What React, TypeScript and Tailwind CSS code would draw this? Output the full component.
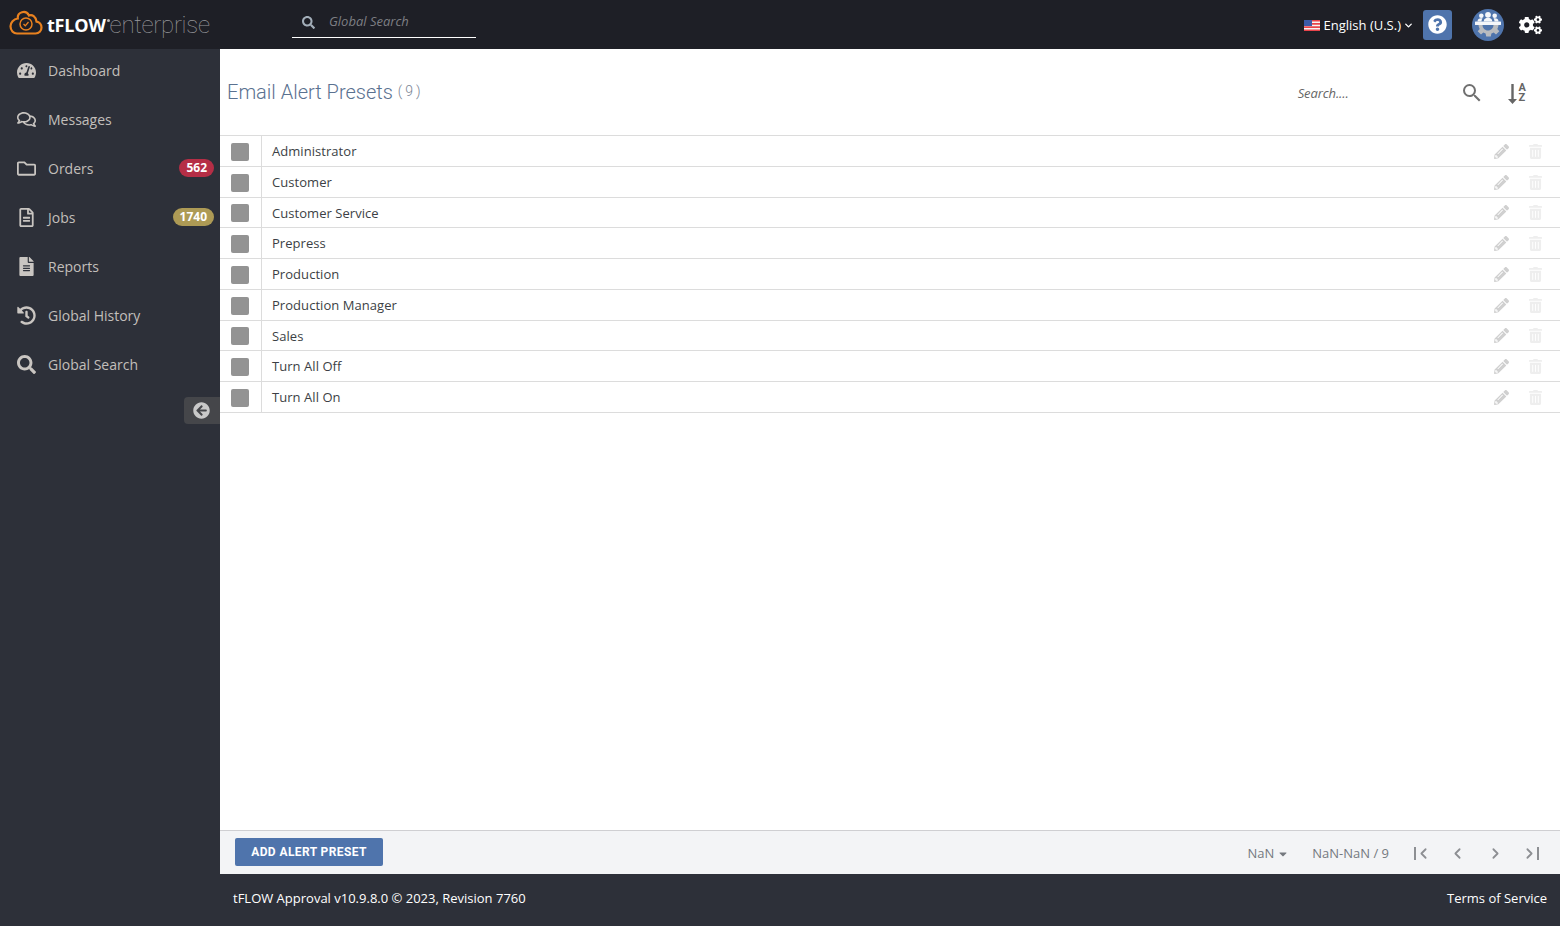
import React from "react";
import { FaTachometerAlt, FaRegComments, FaRegFolder, FaRegFileAlt, FaFileAlt, FaHistory, FaSearch, FaArrowCircleLeft, FaPencilAlt, FaTrashAlt, FaCogs, FaQuestionCircle, FaCaretDown } from "react-icons/fa";
import { LuChevronLeft, LuChevronRight, LuChevronDown } from "react-icons/lu";
import { MdSearch } from "react-icons/md";

const nav: { label: string; Icon: React.ComponentType<{ className?: string }>; badge?: string; color?: string }[] = [
  { label: "Dashboard", Icon: FaTachometerAlt },
  { label: "Messages", Icon: FaRegComments },
  { label: "Orders", Icon: FaRegFolder, badge: "562", color: "bg-[#b52e46]" },
  { label: "Jobs", Icon: FaRegFileAlt, badge: "1740", color: "bg-[#ad9a55]" },
  { label: "Reports", Icon: FaFileAlt },
  { label: "Global History", Icon: FaHistory },
  { label: "Global Search", Icon: FaSearch },
];

const rows = ["Administrator", "Customer", "Customer Service", "Prepress", "Production", "Production Manager", "Sales", "Turn All Off", "Turn All On"];

function Logo() {
  return (
    <svg width="34" height="26" viewBox="0 0 34 26" fill="none" stroke="#e8811f" strokeWidth="2.2" className="mb-[3px] shrink-0">
      <path d="M8 23.5h18.5c3.5 0 6-2.7 6-6 0-3-2.200-5.500-5-5.900C27 6.500 23 4 20 5.500 18.500 2.500 15.500 1.500 13 2.200 10 3 8.500 5.500 8.800 8.500 4.500 9 1.500 12.500 1.500 16.300c0 4 3 7.200 6.500 7.200z" />
      <circle cx="17" cy="14" r="6" strokeWidth="1.5" />
      <path d="M14.500 14l1.800 1.800 3.200-3.800" strokeWidth="1.300" />
    </svg>
  );
}

function Flag() {
  return (
    <svg width="16" height="11" viewBox="0 0 16 11" className="shrink-0">
      <rect width="16" height="11" fill="#f5f5f5" />
      <path d="M0 0h16v1.600H0zM0 3.100h16v1.600H0zM0 6.300h16v1.600H0zM0 9.400h16V11H0z" fill="#e8434a" />
      <rect width="8" height="6" fill="#3b5aa8" />
    </svg>
  );
}

function TeamGear() {
  return (
    <svg width="32" height="32" viewBox="0 0 32 32" className="shrink-0">
      <circle cx="16" cy="16" r="16" fill="#4f74ac" />
      <path d="M5.500 16h5c0 3 2.500 5.500 5.500 5.500s5.500-2.500 5.500-5.500h5c-.1 1.500-.5 2.800-1.200 4l2 2.300-3.300 3.300-2.300-2c-.7.4-1.500.8-2.300 1l-.6 3h-4.600l-.6-3c-.8-.2-1.600-.6-2.300-1l-2.300 2-3.300-3.300 2-2.300c-.7-1.200-1.100-2.500-1.200-4z" fill="#b9bbbf" />
      <g fill="#f4f6fa">
        <circle cx="16" cy="5.800" r="2.900" />
        <circle cx="9.300" cy="6.800" r="2.300" />
        <circle cx="22.700" cy="6.800" r="2.300" />
        <path d="M11.700 12.500c0-2.700 1.900-3.800 4.300-3.800s4.300 1.100 4.300 3.800z" />
        <path d="M5.500 12.500c0-2.300 1.500-3.300 3.500-3.300.8 0 1.300.2 1.500.4-.7.7-1 1.700-1 2.900zM26.500 12.500c0-2.300-1.500-3.300-3.500-3.300-.8 0-1.300.2-1.500.4.700.7 1 1.700 1 2.900z" />
        <rect x="3" y="12.500" width="26" height="3.500" rx="0.600" />
      </g>
    </svg>
  );
}

function SortIcon() {
  return (
    <div className="ml-[24px] mr-[34px] flex items-center text-[#666]">
      <svg width="9" height="20" viewBox="0 0 9 20" className="mt-[3px] shrink-0" fill="#666">
        <path d="M3.300 0h2.400v15h3.300l-4.500 5-4.500-5h3.300z" />
      </svg>
      <span className="ml-[2px] mt-[1px] flex flex-col text-[11px] font-bold leading-[10px]" style={{ fontFamily: 'Roboto, sans-serif' }}>
        <span>A</span>
        <span>Z</span>
      </span>
    </div>
  );
}

export default function App() {
  const font = { fontFamily: '"Open Sans", sans-serif' };
  return (
    <div className="flex h-[926px] w-[1560px] flex-col overflow-hidden bg-white" style={font}>
      <header className="flex h-[49px] shrink-0 items-center bg-[#1e1f26]">
        <div className="flex w-[292px] shrink-0 items-center pl-[9px]">
          <Logo />
          <span className="ml-[4px] text-[18px] font-bold leading-none tracking-[-0.2px] text-white">tFLOW</span>
          <span className="mb-[8px] ml-[1px] h-[3px] w-[3px] shrink-0 rounded-full bg-[#b9b9b9]" />
          <span className="text-[24px] leading-none tracking-[-0.3px] text-[#9a9a9e]" style={{ fontFamily: 'Roboto, sans-serif', fontWeight: 100 }}>enterprise</span>
        </div>
        <div className="mb-[4px] mt-[-1px] flex h-[32px] w-[184px] items-center border-b border-white pl-[10px] pt-[1px]">
          <FaSearch className="h-[13px] w-[13px] text-[#a3aeb9]" />
          <span className="ml-[14px] text-[13px] italic text-[#7d7e83]">Global Search</span>
        </div>
        <div className="ml-auto flex items-center">
          <div className="mt-[2px] flex items-center">
            <Flag />
            <span className="ml-[4px] text-[13px] text-white">English (U.S.)</span>
            <LuChevronDown className="ml-[2px] h-[11px] w-[11px] text-white" strokeWidth={3} />
          </div>
          <div className="ml-[9px] flex h-[30px] w-[29px] items-center justify-center rounded-[3px] bg-[#4f74ac]">
            <FaQuestionCircle className="h-[19px] w-[19px] text-white" />
          </div>
          <div className="ml-[20px]"><TeamGear /></div>
          <FaCogs className="ml-[15px] mr-[18px] h-[22px] w-[23px] text-white" />
        </div>
      </header>

      <div className="flex min-h-0 flex-1">
        <aside className="relative w-[220px] shrink-0 bg-[#2d3039]">
          {nav.map(({ label, Icon, badge, color }) => (
            <div key={label} className="flex h-[49px] items-center pb-[7px] pl-[17px] pr-[6px]">
              <span className="flex w-[31px] shrink-0"><Icon className="h-[19px] w-[19px] text-[#c9c5c1]" /></span>
              <span className="text-[14px] text-[#c2bfbb]">{label}</span>
              {badge && <span className={`ml-auto flex h-[18px] items-center rounded-full px-[7px] text-[12px] font-bold text-white ${color}`}>{badge}</span>}
            </div>
          ))}
          <div className="absolute right-0 top-[348px] flex h-[27px] w-[36px] items-center rounded-l-[4px] bg-[#45464a] pl-[9px]">
            <FaArrowCircleLeft className="h-[17px] w-[17px] text-[#c9c9c9]" />
          </div>
        </aside>

        <main className="flex min-w-0 flex-1 flex-col">
          <div className="flex h-[86px] shrink-0 items-center pl-[7px]">
            <h1 className="text-[20px] text-[#5a7190]" style={{ fontFamily: 'Roboto, sans-serif', fontWeight: 300 }}>Email Alert Presets</h1>
            <span className="mb-[2px] ml-[5px] text-[14px] tracking-[3px] text-[#7a8594]" style={{ fontFamily: 'Roboto, sans-serif', fontWeight: 300 }}>(9)</span>
            <span className="ml-auto mt-[4px] text-[13px] tracking-[-0.1px] italic text-[#666]">Search....</span>
            <MdSearch className="ml-[111px] mt-[2px] h-[24px] w-[24px] text-[#707070]" />
            <SortIcon />
          </div>
          <div className="border-t border-[#dcdcdc]">
            {rows.map((r) => (
              <div key={r} className="flex h-[30.78px] items-center border-b border-[#dcdcdc]">
                <div className="flex h-full w-[42px] shrink-0 items-center border-r border-[#dcdcdc] pl-[11px] pt-[2px]">
                  <span className="h-[18px] w-[18px] rounded-[2px] bg-[#939393]" />
                </div>
                <span className="ml-[10px] pt-[2px] text-[13px] tracking-[0.05px] text-[#3c3f45]">{r}</span>
                <FaPencilAlt className="ml-auto mt-[1px] h-[15px] w-[15px] text-[#d0d0d0]" />
                <FaTrashAlt className="ml-[20px] mr-[18px] mt-[1px] h-[15px] w-[13px] text-[#eeeeee]" />
              </div>
            ))}
          </div>
          <div className="mt-auto flex h-[44px] shrink-0 items-center border-t border-[#cfcfd2] bg-[#f3f4f6] pl-[15px]">
            <button className="mb-[2px] flex h-[28px] w-[148px] items-center justify-center rounded-[2px] bg-[#4f74ac] text-[12px] font-bold tracking-[0.4px] text-white" style={{ fontFamily: 'Roboto, sans-serif' }}>ADD ALERT PRESET</button>
            <div className="ml-auto flex items-center pt-[2px] text-[13px] text-[#75797f]">
              <span>NaN</span>
              <FaCaretDown className="ml-[4px] h-[12px] w-[10px] text-[#75797f]" />
              <span className="ml-[24px]">NaN-NaN / 9</span>
              <span className="ml-[25px] flex items-center text-[#8d8f93]">
                <span className="h-[13px] w-[2px] bg-[#8d8f93]" />
                <LuChevronLeft className="-ml-[1px] h-[17px] w-[17px]" strokeWidth={2.5} />
              </span>
              <LuChevronLeft className="ml-[17px] h-[17px] w-[17px] text-[#8d8f93]" strokeWidth={2.5} />
              <LuChevronRight className="ml-[21px] h-[17px] w-[17px] text-[#8d8f93]" strokeWidth={2.5} />
              <span className="ml-[17px] mr-[21px] flex items-center text-[#8d8f93]">
                <LuChevronRight className="-mr-[1px] h-[17px] w-[17px]" strokeWidth={2.5} />
                <span className="h-[13px] w-[2px] bg-[#8d8f93]" />
              </span>
            </div>
          </div>
        </main>
      </div>

      <footer className="flex h-[52px] shrink-0 items-center justify-between bg-[#2d3039] pb-[2px] pl-[233px] pr-[13px] text-[13px] text-white">
        <span>tFLOW Approval v10.9.8.0 © 2023, Revision 7760</span>
        <span>Terms of Service</span>
      </footer>
    </div>
  );
}
